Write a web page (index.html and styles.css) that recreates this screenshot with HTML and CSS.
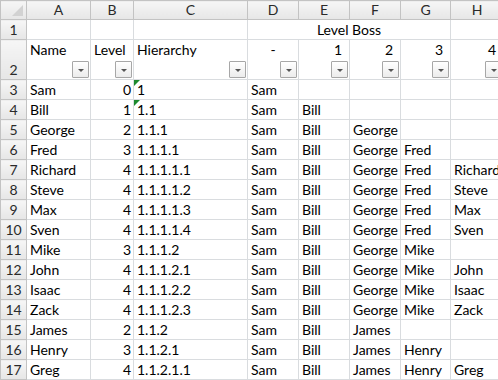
FILE: index.html
```html
<!DOCTYPE html>
<html lang="en">
<head>
    <meta charset="UTF-8">
    <meta name="viewport" content="width=device-width, initial-scale=1.0">
    <link rel="stylesheet" href="styles.css">
</head>
<body>
    <table class="sheet">
        <colgroup>
            <col class="w-rh"><col class="w-a"><col class="w-b"><col class="w-c"><col class="w-d">
            <col class="w-e"><col class="w-f"><col class="w-g"><col class="w-h">
        </colgroup>
        <thead>
            <tr class="col-heads">
                <th class="corner"><span class="corner-mark"></span></th>
                <th>A</th><th>B</th><th>C</th><th>D</th><th>E</th><th>F</th><th>G</th><th>H</th>
            </tr>
        </thead>
        <tbody>
            <tr>
                <th class="rh">1</th>
                <td></td><td></td><td></td>
                <td colspan="4" class="center">Level Boss</td>
                <td></td>
            </tr>
            <tr class="tall">
                <th class="rh">2</th>
                <td>Name<span class="filter"></span></td>
                <td>Level<span class="filter"></span></td>
                <td>Hierarchy<span class="filter"></span></td>
                <td class="center">-<span class="filter"></span></td>
                <td class="num-head">1<span class="filter"></span></td>
                <td class="num-head">2<span class="filter"></span></td>
                <td class="num-head">3<span class="filter"></span></td>
                <td class="num-head">4<span class="filter"></span></td>
            </tr>
        </tbody>
        <tbody id="rows"></tbody>
    </table>

    <script>
        // name, level, hierarchy, bosses (D..H)
        const data = [
            ['Sam', 0, '1', ['Sam']],
            ['Bill', 1, '1.1', ['Sam', 'Bill']],
            ['George', 2, '1.1.1', ['Sam', 'Bill', 'George']],
            ['Fred', 3, '1.1.1.1', ['Sam', 'Bill', 'George', 'Fred']],
            ['Richard', 4, '1.1.1.1.1', ['Sam', 'Bill', 'George', 'Fred', 'Richard']],
            ['Steve', 4, '1.1.1.1.2', ['Sam', 'Bill', 'George', 'Fred', 'Steve']],
            ['Max', 4, '1.1.1.1.3', ['Sam', 'Bill', 'George', 'Fred', 'Max']],
            ['Sven', 4, '1.1.1.1.4', ['Sam', 'Bill', 'George', 'Fred', 'Sven']],
            ['Mike', 3, '1.1.1.2', ['Sam', 'Bill', 'George', 'Mike']],
            ['John', 4, '1.1.1.2.1', ['Sam', 'Bill', 'George', 'Mike', 'John']],
            ['Isaac', 4, '1.1.1.2.2', ['Sam', 'Bill', 'George', 'Mike', 'Isaac']],
            ['Zack', 4, '1.1.1.2.3', ['Sam', 'Bill', 'George', 'Mike', 'Zack']],
            ['James', 2, '1.1.2', ['Sam', 'Bill', 'James']],
            ['Henry', 3, '1.1.2.1', ['Sam', 'Bill', 'James', 'Henry']],
            ['Greg', 4, '1.1.2.1.1', ['Sam', 'Bill', 'James', 'Henry', 'Greg']]
        ];

        const body = document.getElementById('rows');
        data.forEach((row, i) => {
            const [name, level, hier, bosses] = row;
            const tr = document.createElement('tr');
            // first two hierarchy cells carry the "number stored as text" flag
            const flag = i < 2 ? '<span class="flag"></span>' : '';
            let html = `<th class="rh">${i + 3}</th><td>${name}</td><td class="num">${level}</td><td class="hier">${flag}${hier}</td>`;
            for (let c = 0; c < 5; c++) {
                html += `<td>${bosses[c] || ''}</td>`;
            }
            tr.innerHTML = html;
            body.appendChild(tr);
        });
    </script>
</body>
</html>
```

FILE: styles.css
```css
body {
    margin: 0;
    background: #fff;
    overflow: hidden;
    font-family: 'Lato', 'Liberation Sans', sans-serif;
    font-size: 14px;
    color: #000;
}

.sheet {
    border-collapse: collapse;
    table-layout: fixed;
    width: 503px;
}

.w-rh { width: 26px; }
.w-a { width: 64px; }
.w-b { width: 43px; }
.w-c { width: 114px; }
.w-d { width: 51px; }
.w-e { width: 51px; }
.w-f { width: 51px; }
.w-g { width: 50px; }
.w-h { width: 53px; }

.sheet td {
    position: relative;
    height: 19px;
    padding: 0 3px;
    border: 1px solid #d9dcdf;
    vertical-align: top;
    line-height: 19px;
    white-space: nowrap;
    overflow: hidden;
    box-sizing: border-box;
}

.sheet th {
    background: linear-gradient(#f6f6f6, #e6e6e6);
    border: 1px solid #c3c3c3;
    font-weight: normal;
    color: #2a2a2a;
    padding: 0;
    line-height: 19px;
}

.col-heads th {
    height: 18px;
    line-height: 18px;
    text-align: center;
}

.sheet th.rh {
    height: 19px;
    text-align: center;
    vertical-align: top;
}

.tall td,
.tall th.rh {
    height: 39px;
}

.tall th.rh {
    vertical-align: bottom;
}

.corner {
    position: relative;
}

.corner-mark {
    position: absolute;
    right: 3px;
    bottom: 3px;
    width: 0;
    height: 0;
    border-left: 11px solid transparent;
    border-bottom: 11px solid #d2d2d2;
}

.center {
    text-align: center;
}

.num {
    text-align: right;
}

.sheet td.num {
    padding-right: 2px;
}

.sheet td.num-head {
    text-align: right;
    padding-right: 7px;
}

.filter {
    position: absolute;
    right: 1px;
    bottom: 1px;
    width: 15px;
    height: 15px;
    border: 1px solid #a7a7a7;
    border-radius: 1px;
    background: linear-gradient(#ffffff, #ececec);
}

.filter::after {
    content: '';
    position: absolute;
    left: 5px;
    top: 7px;
    border-left: 3px solid transparent;
    border-right: 3px solid transparent;
    border-top: 3px solid #555;
}

.flag {
    position: absolute;
    left: 0;
    top: 0;
    width: 0;
    height: 0;
    border-top: 6px solid #1d8a2e;
    border-right: 6px solid transparent;
}
```
